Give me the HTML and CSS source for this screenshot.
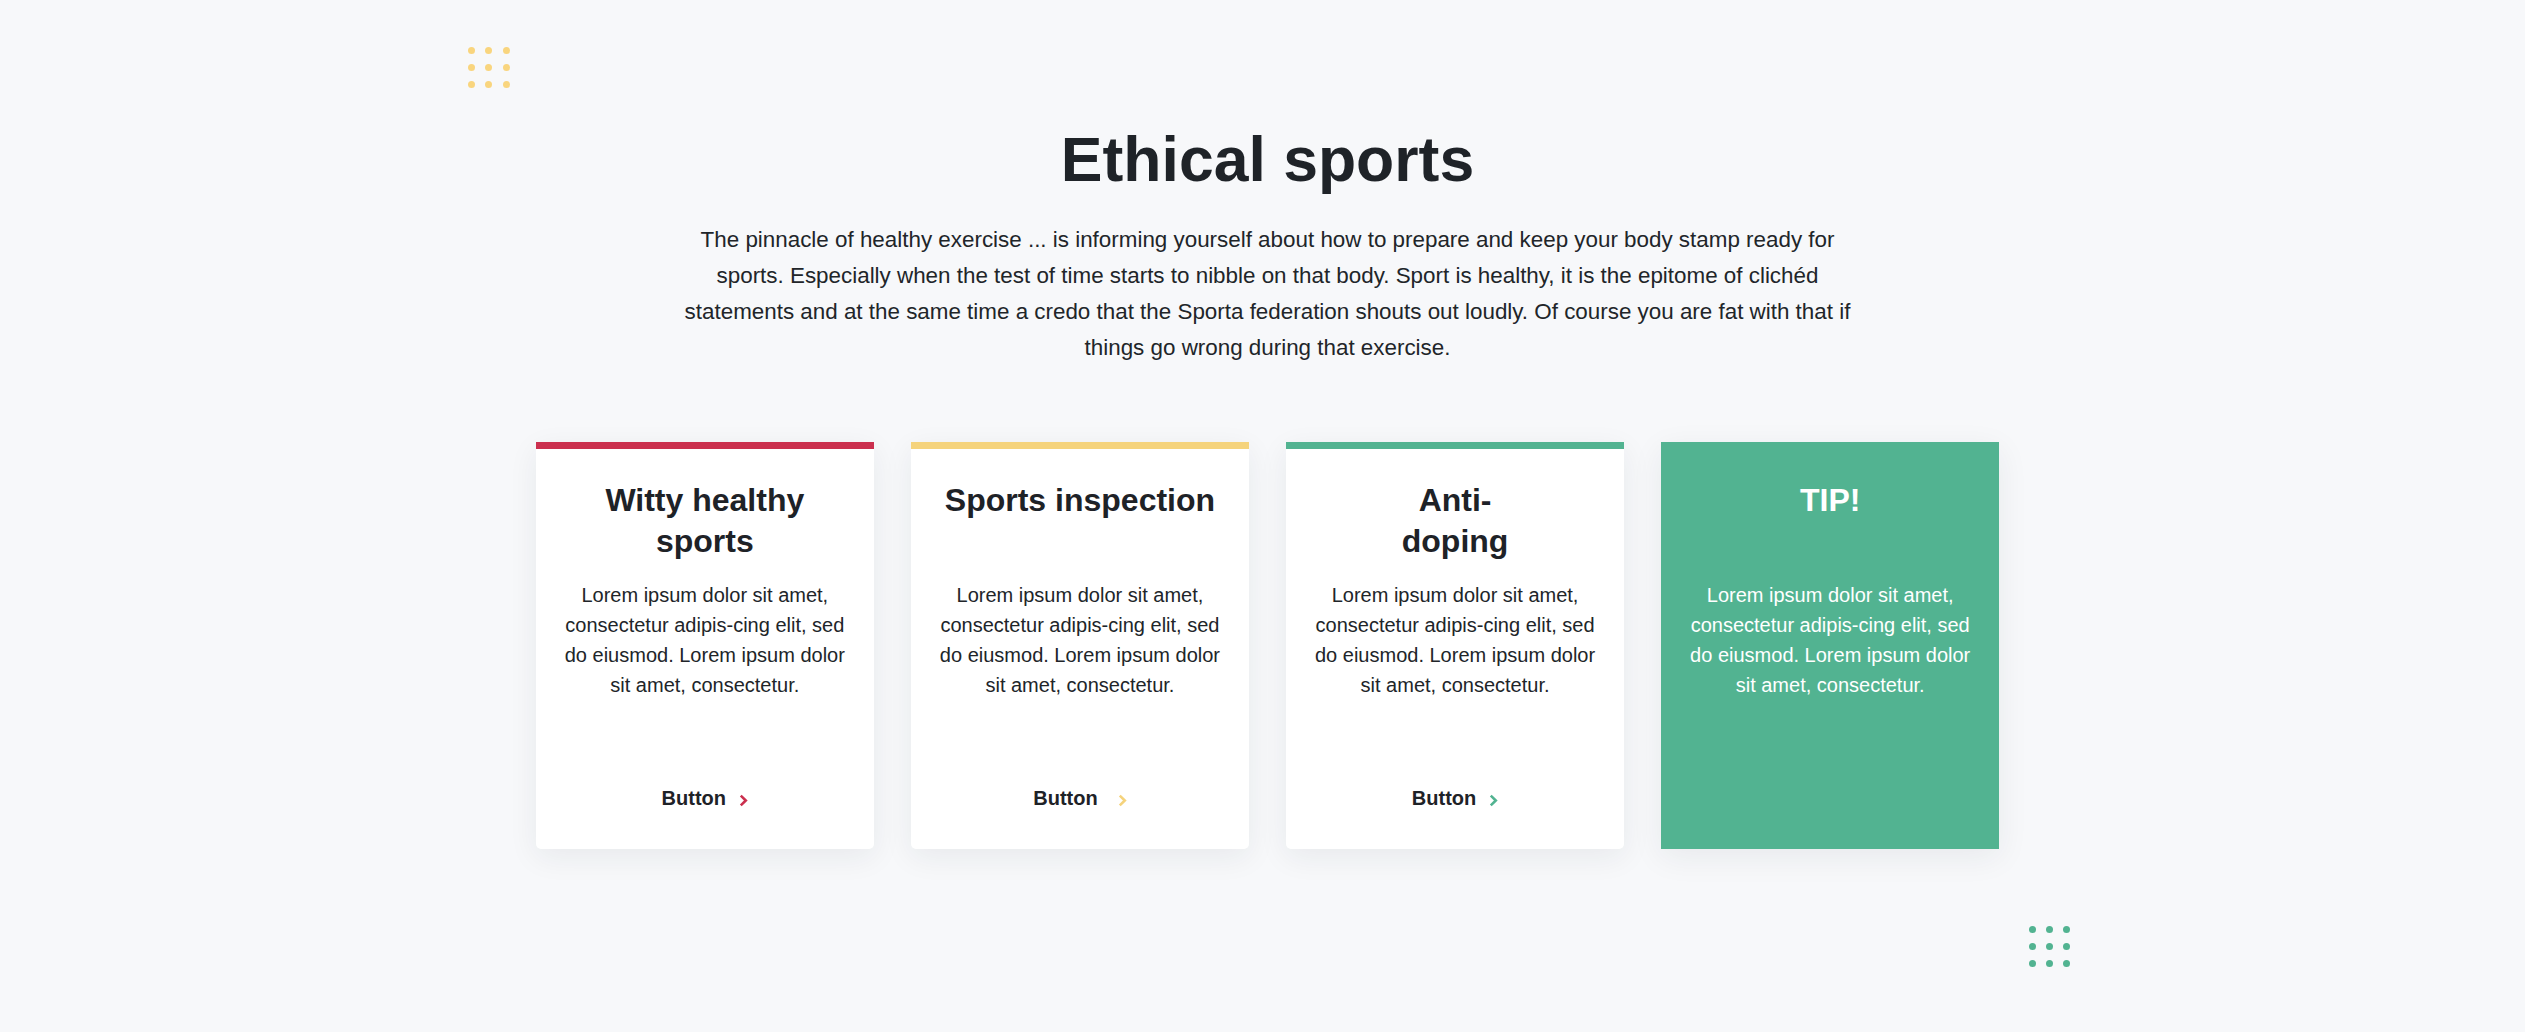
FILE: index.html
```html
<!DOCTYPE html>
<html lang="en">
<head>
<meta charset="utf-8">
<title>Ethical sports</title>
<link rel="stylesheet" href="styles.css">
</head>
<body>
<main class="page">
  <div class="dots dots-top">
    <span></span><span></span><span></span>
    <span></span><span></span><span></span>
    <span></span><span></span><span></span>
  </div>
  <section class="section">
    <h1 class="section-title">Ethical sports</h1>
    <p class="section-lead">The pinnacle of healthy exercise ... is informing yourself about how to prepare and keep your body stamp ready for sports. Especially when the test of time starts to nibble on that body. Sport is healthy, it is the epitome of clichéd statements and at the same time a credo that the Sporta federation shouts out loudly. Of course you are fat with that if things go wrong during that exercise.</p>
    <div class="cards">
      <article class="card card-red">
        <h2 class="card-title">Witty healthy sports</h2>
        <p class="card-text">Lorem ipsum dolor sit amet, consectetur adipis-cing elit, sed do eiusmod. Lorem ipsum dolor sit amet, consectetur.</p>
        <a class="card-link" href="#">Button
          <svg class="chev" viewBox="0 0 9 13" width="9" height="13"><path d="M1.8 1.6 L6.8 6.5 L1.8 11.4" fill="none" stroke="currentColor" stroke-width="2.6"/></svg>
        </a>
      </article>
      <article class="card card-yellow">
        <h2 class="card-title">Sports inspection</h2>
        <p class="card-text">Lorem ipsum dolor sit amet, consectetur adipis-cing elit, sed do eiusmod. Lorem ipsum dolor sit amet, consectetur.</p>
        <a class="card-link card-link-far" href="#">Button
          <svg class="chev" viewBox="0 0 9 13" width="9" height="13"><path d="M1.8 1.6 L6.8 6.5 L1.8 11.4" fill="none" stroke="currentColor" stroke-width="2.6"/></svg>
        </a>
      </article>
      <article class="card card-green">
        <h2 class="card-title">Anti-<br>doping</h2>
        <p class="card-text">Lorem ipsum dolor sit amet, consectetur adipis-cing elit, sed do eiusmod. Lorem ipsum dolor sit amet, consectetur.</p>
        <a class="card-link" href="#">Button
          <svg class="chev" viewBox="0 0 9 13" width="9" height="13"><path d="M1.8 1.6 L6.8 6.5 L1.8 11.4" fill="none" stroke="currentColor" stroke-width="2.6"/></svg>
        </a>
      </article>
      <article class="card card-tip">
        <h2 class="card-title">TIP!</h2>
        <p class="card-text">Lorem ipsum dolor sit amet, consectetur adipis-cing elit, sed do eiusmod. Lorem ipsum dolor sit amet, consectetur.</p>
      </article>
    </div>
  </section>
  <div class="dots dots-bottom">
    <span></span><span></span><span></span>
    <span></span><span></span><span></span>
    <span></span><span></span><span></span>
  </div>
</main>
</body>
</html>
```

FILE: styles.css
```css
html, body {
  margin: 0;
  padding: 0;
}

body {
  background: #f7f8fa;
  font-family: "Liberation Sans", Arial, sans-serif;
  color: #212529;
}

.page {
  position: relative;
  min-height: 1032px;
  box-sizing: border-box;
  padding: 121px 0 0 10px;
}

.section {
  width: 1463px;
  margin: 0 auto;
  display: flex;
  flex-direction: column;
  align-items: center;
}

.section-title {
  margin: 0;
  font-size: 62.5px;
  line-height: 76.8px;
  font-weight: 700;
  color: #1f2328;
  text-align: center;
}

.section-lead {
  margin: 24px 0 0;
  max-width: 1185px;
  font-size: 22.4px;
  line-height: 36px;
  text-align: center;
  color: #212529;
}

.cards {
  margin-top: 76px;
  width: 100%;
  display: grid;
  grid-template-columns: repeat(4, 1fr);
  column-gap: 37.5px;
}

.card {
  box-sizing: border-box;
  height: 407px;
  background: #ffffff;
  border-top: 7px solid #cb2f4e;
  border-radius: 0 0 5px 5px;
  box-shadow: 0 8px 30px rgba(30, 40, 60, 0.07);
  padding: 31.6px 20px 35.6px;
  display: flex;
  flex-direction: column;
  align-items: center;
  text-align: center;
}

.card-red { border-top-color: #cb2f4e; }
.card-yellow { border-top-color: #f5d37c; }
.card-green { border-top-color: #52b391; }

.card-tip {
  background: #52b391;
  border-top-color: #52b391;
  border-radius: 0;
  color: #ffffff;
}

.card-title {
  margin: 0;
  min-height: 82px;
  font-size: 32px;
  line-height: 41px;
  font-weight: 700;
  color: #1e2227;
}

.card-tip .card-title {
  color: #ffffff;
}

.card-text {
  margin: 18px 0 0;
  font-size: 20px;
  line-height: 30px;
  color: #212529;
}

.card-tip .card-text {
  color: #ffffff;
}

.card-link {
  margin-top: auto;
  display: inline-flex;
  align-items: center;
  gap: 13px;
  font-size: 20px;
  line-height: 30px;
  font-weight: 700;
  color: #1e2227;
  text-decoration: none;
}

.card-link-far {
  gap: 20px;
}

.chev {
  display: block;
  margin-top: 4px;
}

.card-red .chev { color: #cb2f4e; }
.card-yellow .chev { color: #f5d37c; }
.card-green .chev { color: #52b391; }

.dots {
  position: absolute;
  display: grid;
  grid-template-columns: repeat(3, 7px);
  grid-auto-rows: 7px;
  gap: 10.3px;
}

.dots span {
  width: 7px;
  height: 7px;
  border-radius: 50%;
}

.dots-top {
  left: 468px;
  top: 46.5px;
}

.dots-top span {
  background: #f9d57e;
}

.dots-bottom {
  left: 2028.5px;
  top: 925.5px;
}

.dots-bottom span {
  background: #52b391;
}
```
